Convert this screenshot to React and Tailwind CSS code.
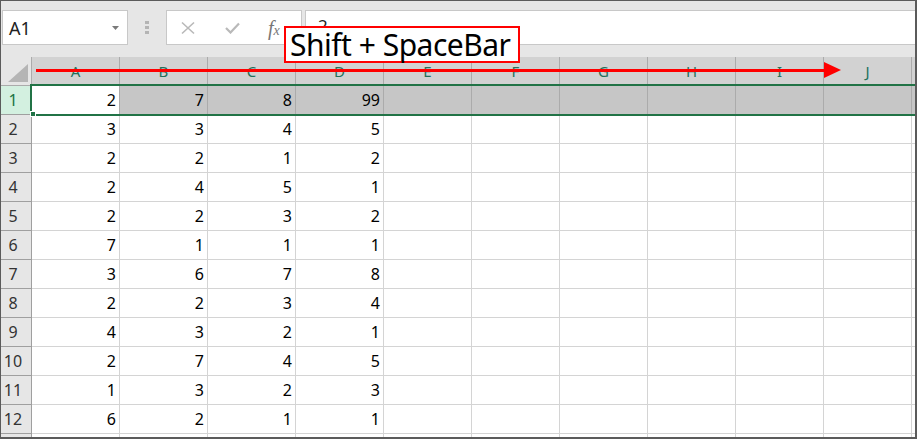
import React from "react"

const cols = ["A", "B", "C", "D", "E", "F", "G", "H", "I", "J"]

const data = [
  [2, 7, 8, 99],
  [3, 3, 4, 5],
  [2, 2, 1, 2],
  [2, 4, 5, 1],
  [2, 2, 3, 2],
  [7, 1, 1, 1],
  [3, 6, 7, 8],
  [2, 2, 3, 4],
  [4, 3, 2, 1],
  [2, 7, 4, 5],
  [1, 3, 2, 3],
  [6, 2, 1, 1],
]

function FormulaBar() {
  return (
    <div className="h-[56px] bg-[#e6e6e6] flex items-start pt-[9px] pl-[1px]">
      {/* name box */}
      <div className="w-[126px] h-[35px] bg-white border border-[#c8c8c8] flex items-center justify-between pl-[6px] pr-[8px]">
        <span className="text-[18px] text-[#222] leading-none">A1</span>
        <svg width="7" height="4" viewBox="0 0 7 4">
          <path d="M0 0 L7 0 L3.5 4 Z" fill="#7a7a7a" />
        </svg>
      </div>
      {/* grip dots */}
      <div className="w-[38px] h-[35px] flex flex-col items-center justify-center gap-[2px]">
        <div className="w-[4px] h-[3px] bg-[#b4b4b4]"></div>
        <div className="w-[4px] h-[3px] bg-[#b4b4b4]"></div>
        <div className="w-[4px] h-[3px] bg-[#b4b4b4]"></div>
      </div>
      {/* cancel / enter / fx */}
      <div className="w-[136px] h-[35px] bg-white border border-[#c8c8c8] flex items-center pl-[13px]">
        <svg width="16" height="14" viewBox="0 0 16 14">
          <path d="M2 1.5 L14 12.5 M14 1.5 L2 12.5" stroke="#b9b9b9" strokeWidth="1.6" fill="none" />
        </svg>
        <svg className="ml-[29px]" width="15" height="12" viewBox="0 0 15 12">
          <path d="M1 6 L5.5 10.5 L14 1.5" stroke="#b9b9b9" strokeWidth="2.2" fill="none" />
        </svg>
        <span className="ml-[28px] text-[20px] italic text-[#777] font-['Liberation_Serif',serif] leading-none">
          f<span className="text-[14px]">x</span>
        </span>
      </div>
      {/* formula input */}
      <div className="ml-[3px] flex-1 h-[35px] bg-white border border-r-0 border-[#c8c8c8] pl-[12px] pt-[3px]">
        <span className="text-[17px] text-[#222] leading-none">2</span>
      </div>
    </div>
  )
}

function HeaderRow() {
  return (
    <div className="flex h-[29px]">
      <div className="w-[31px] shrink-0 bg-[#e6e6e6] border-r border-b border-[#ababab] flex items-end justify-end pr-[3px] pb-[3px]">
        <svg width="20" height="18" viewBox="0 0 20 18">
          <path d="M20 0 L20 18 L0 18 Z" fill="#b5b5b5" />
        </svg>
      </div>
      {cols.map((c) => (
        <div
          key={c}
          className="w-[88px] shrink-0 bg-[#d2d2d2] border-r border-b border-[#ababab] flex items-center justify-center text-[15px] text-[#23705a]"
        >
          {c}
        </div>
      ))}
      <div className="flex-1 bg-[#d2d2d2] border-b border-[#ababab]"></div>
    </div>
  )
}

function DataRow({ n, values, label = true }) {
  const selected = n === 1
  return (
    <div className="flex h-[29px]">
      <div
        className={
          selected
            ? "w-[31px] shrink-0 bg-[#d3f0e0] border-r border-b border-[#9f9f9f] flex items-center justify-center pr-[6px] text-[16px] text-[#217346]"
            : "w-[31px] shrink-0 bg-[#e6e6e6] border-r border-b border-[#9f9f9f] flex items-center justify-center pr-[6px] text-[16px] text-[#333]"
        }
      >
        {label ? n : ""}
      </div>
      {cols.map((c, i) => (
        <div
          key={c}
          className={
            selected
              ? i === 0
                ? "w-[88px] shrink-0 bg-white border-r border-b border-[#ababab] flex items-center justify-end pr-[3px] text-[16px] text-black"
                : "w-[88px] shrink-0 bg-[#c6c6c6] border-r border-b border-[#ababab] flex items-center justify-end pr-[3px] text-[16px] text-black"
              : "w-[88px] shrink-0 bg-white border-r border-b border-[#d4d4d4] flex items-center justify-end pr-[3px] text-[16px] text-black"
          }
        >
          {values[i] ?? ""}
        </div>
      ))}
      <div className={selected ? "flex-1 bg-[#c6c6c6] border-b border-[#ababab]" : "flex-1 bg-white border-b border-[#d4d4d4]"}></div>
    </div>
  )
}

export default function App() {
  return (
    <div className="w-[917px] h-[439px] relative overflow-hidden bg-white border-t border-l border-r-2 border-b-2 border-[#5b5b5b] font-['Noto_Sans',sans-serif]">
      <FormulaBar />
      <HeaderRow />
      {data.map((row, i) => (
        <DataRow key={i} n={i + 1} values={row} />
      ))}
      <DataRow n={13} values={[]} label={false} />

      {/* selection outline for row 1 */}
      <div className="absolute left-[29px] top-[83px] w-[900px] h-[32px] border-2 border-[#217346] pointer-events-none"></div>
      <div className="absolute left-[29px] top-[110px] w-[6px] h-[6px] bg-[#217346] border border-white pointer-events-none"></div>

      {/* annotation arrow */}
      <div className="absolute left-[35px] top-[68px] w-[791px] h-[3px] bg-[#ff0000]"></div>
      <svg className="absolute left-[823px] top-[61px]" width="17" height="16" viewBox="0 0 17 16">
        <path d="M0 0 L17 8 L0 16 Z" fill="#ff0000" />
      </svg>

      {/* annotation label */}
      <div className="absolute left-[283px] top-[25px] w-[236px] h-[37px] bg-white border-2 border-[#ff0000] flex items-center pl-[4px]">
        <span className="text-[30px] leading-none tracking-[-0.5px] text-black">Shift + SpaceBar</span>
      </div>
    </div>
  )
}
